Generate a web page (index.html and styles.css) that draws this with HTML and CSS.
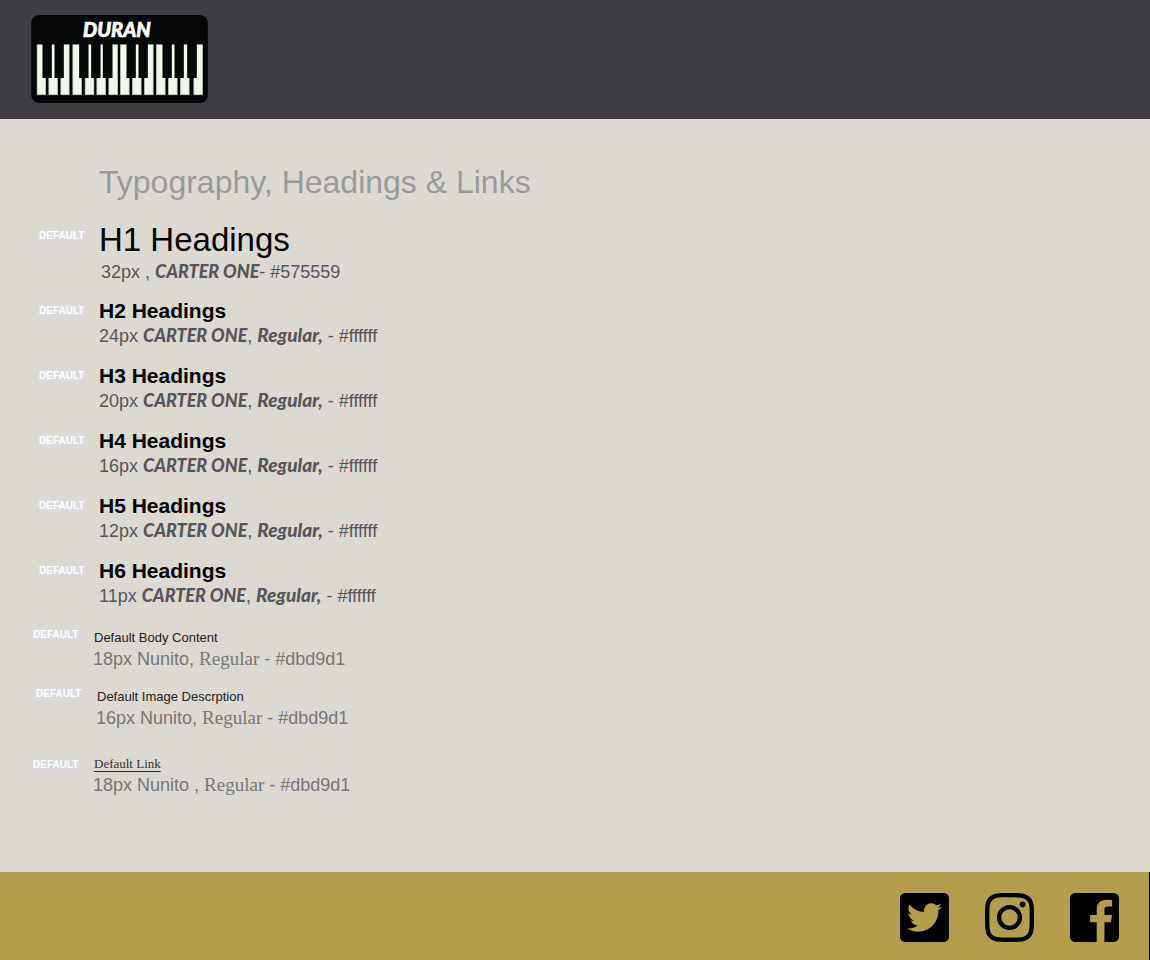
FILE: index.html
```html
<!DOCTYPE html>
<html lang="en">
<head>
<meta charset="utf-8">
<meta name="viewport" content="width=device-width, initial-scale=1">
<title>Duran Style Guide</title>
<link rel="stylesheet" href="styles.css">
</head>
<body>
<header class="site-header">
  <svg class="logo" viewBox="34 30 530 264" role="img" aria-label="Duran">
    <rect x="34" y="30" width="530" height="264" rx="24" fill="#050706"/>
    <text class="logo-text" x="291" y="95" text-anchor="middle">DURAN</text>
    <path fill="#f0f8ea" stroke="#c9cfc4" stroke-width="2" d="M52 119h25v150h-25zM87 119h26v150h-26zM123 119h25v150h-25zM159 119h26v150h-26zM196 119h26v150h-26zM231 119h26v150h-26zM267 119h26v150h-26zM302 119h26v150h-26zM338 119h26v150h-26zM374 119h26v150h-26zM410 119h26v150h-26zM446 119h26v150h-26zM482 119h26v150h-26zM522 119h26v150h-26z"/>
    <path fill="#050706" d="M68 103h28v116h-28zM104 103h28v116h-28zM178 103h28v116h-28zM214 103h28v116h-28zM249 103h29v116h-29zM320 103h28v116h-28zM356 103h28v116h-28zM428 103h28v116h-28zM464 103h28v116h-28zM502 103h29v116h-29z"/>
  </svg>
</header>

<main class="guide">
  <h2 class="guide-title">Typography, Headings &amp; Links</h2>

  <section class="sample sample-first">
    <span class="tag">DEFAULT</span>
    <div>
      <h1 class="display">H1 Headings</h1>
      <p class="spec spec-first">32px , <b class="brand">CARTER ONE</b>- #575559</p>
    </div>
  </section>
  <section class="sample">
    <span class="tag">DEFAULT</span>
    <div>
      <h2 class="heading">H2 Headings</h2>
      <p class="spec">24px <b class="brand">CARTER ONE</b>, <b class="brand brand-style">Regular,</b> - #ffffff</p>
    </div>
  </section>
  <section class="sample">
    <span class="tag">DEFAULT</span>
    <div>
      <h3 class="heading">H3 Headings</h3>
      <p class="spec">20px <b class="brand">CARTER ONE</b>, <b class="brand brand-style">Regular,</b> - #ffffff</p>
    </div>
  </section>
  <section class="sample">
    <span class="tag">DEFAULT</span>
    <div>
      <h4 class="heading">H4 Headings</h4>
      <p class="spec">16px <b class="brand">CARTER ONE</b>, <b class="brand brand-style">Regular,</b> - #ffffff</p>
    </div>
  </section>
  <section class="sample">
    <span class="tag">DEFAULT</span>
    <div>
      <h5 class="heading">H5 Headings</h5>
      <p class="spec">12px <b class="brand">CARTER ONE</b>, <b class="brand brand-style">Regular,</b> - #ffffff</p>
    </div>
  </section>
  <section class="sample">
    <span class="tag">DEFAULT</span>
    <div>
      <h6 class="heading">H6 Headings</h6>
      <p class="spec">11px <b class="brand">CARTER ONE</b>, <b class="brand brand-style">Regular,</b> - #ffffff</p>
    </div>
  </section>

  <section class="sample sample-body">
    <span class="tag">DEFAULT</span>
    <div>
      <p class="copy">Default Body Content</p>
      <p class="spec spec-light">18px Nunito, <span class="serif">Regular</span> - #dbd9d1</p>
    </div>
  </section>
  <section class="sample sample-body sample-image">
    <span class="tag">DEFAULT</span>
    <div>
      <p class="copy">Default Image Descrption</p>
      <p class="spec spec-light">16px Nunito, <span class="serif">Regular</span> - #dbd9d1</p>
    </div>
  </section>
  <section class="sample sample-body sample-link">
    <span class="tag">DEFAULT</span>
    <div>
      <p class="copy"><a class="link" href="#">Default Link</a></p>
      <p class="spec spec-light">18px Nunito , <span class="serif">Regular</span> - #dbd9d1</p>
    </div>
  </section>
</main>

<footer class="site-footer">
  <a class="social" href="#" aria-label="Twitter">
    <svg viewBox="0 32 448 448"><path d="M400 32H48C21.500 32 0 53.500 0 80v352c0 26.500 21.500 48 48 48h352c26.500 0 48-21.500 48-48V80c0-26.500-21.500-48-48-48zm-48.900 158.800c.2 2.800.2 5.700.2 8.500 0 86.700-66 186.600-186.600 186.600-37.200 0-71.700-10.800-100.700-29.400 5.300.6 10.400.8 15.800.8 30.700 0 58.900-10.400 81.400-28-28.800-.6-53-19.500-61.300-45.500 10.100 1.500 19.200 1.500 29.600-1.200-30-6.100-52.500-32.500-52.500-64.400v-.8c8.700 4.900 18.900 7.900 29.600 8.300a65.447 65.447 0 0 1-29.200-54.600c0-12.200 3.200-23.400 8.900-33.100 32.300 39.800 80.800 65.800 135.200 68.600-9.300-44.500 24-80.600 64-80.600 18.900 0 35.900 7.900 47.900 20.700 14.800-2.800 29-8.300 41.600-15.800-4.900 15.200-15.200 28-28.800 36.100 13.200-1.400 26-5.100 37.800-10.200-8.900 13.100-20.100 24.700-32.900 34z"/></svg>
  </a>
  <a class="social" href="#" aria-label="Instagram">
    <svg viewBox="0 32 448 448"><path d="M224.100 141c-63.600 0-114.900 51.300-114.900 114.900s51.300 114.900 114.900 114.900S339 319.500 339 255.900 287.700 141 224.100 141zm0 189.600c-41.100 0-74.700-33.500-74.700-74.700s33.500-74.700 74.700-74.700 74.700 33.500 74.700 74.700-33.600 74.700-74.700 74.700zm146.400-194.300c0 14.900-12 26.800-26.800 26.800-14.900 0-26.800-12-26.800-26.800s12-26.800 26.800-26.800 26.800 12 26.800 26.800zm76.100 27.200c-1.700-35.900-9.900-67.700-36.200-93.900-26.200-26.200-58-34.400-93.900-36.200-37-2.100-147.900-2.100-184.900 0-35.800 1.700-67.600 9.900-93.900 36.100s-34.400 58-36.200 93.900c-2.100 37-2.100 147.900 0 184.900 1.700 35.900 9.900 67.700 36.200 93.900s58 34.400 93.900 36.200c37 2.100 147.900 2.100 184.900 0 35.900-1.700 67.700-9.900 93.900-36.200 26.200-26.200 34.400-58 36.200-93.900 2.100-37 2.100-147.800 0-184.800zM398.800 388c-7.800 19.600-22.900 34.700-42.600 42.600-29.500 11.700-99.500 9-132.100 9s-102.700 2.600-132.100-9c-19.600-7.800-34.700-22.900-42.600-42.600-11.700-29.500-9-99.500-9-132.100s-2.600-102.700 9-132.100c7.800-19.600 22.900-34.700 42.600-42.600 29.500-11.700 99.500-9 132.100-9s102.700-2.600 132.100 9c19.600 7.800 34.700 22.900 42.600 42.600 11.700 29.500 9 99.500 9 132.100s2.700 102.700-9 132.100z"/></svg>
  </a>
  <a class="social" href="#" aria-label="Facebook">
    <svg viewBox="0 32 448 448"><path d="M48 32h352c26 0 48 22 48 48v352c0 26-22 48-48 48h-85V300h60l9-68h-69v-43c0-20 6-33 34-33h36V97c-6-1-28-3-53-3-53 0-88 32-88 91v47h-60v68h60v180H48c-26 0-48-22-48-48V80c0-26 22-48 48-48z"/></svg>
  </a>
</footer>
</body>
</html>
```
FILE: styles.css
```css
* {
  box-sizing: border-box;
}

body {
  display: flex;
  flex-direction: column;
  min-height: 100vh;
  margin: 0;
  background: #dbd9d1;
  color: #000;
  font-family: "Liberation Sans", Arial, sans-serif;
}

h1, h2, h3, h4, h5, h6, p {
  margin: 0;
}

.site-header {
  padding: 15px 31px 16px;
  background: #3e3c41;
}

.logo {
  display: block;
  width: 177px;
  height: 88px;
}

.logo-text {
  fill: #fff;
  stroke: #fff;
  stroke-width: 2px;
  font: italic 900 60px Lato, sans-serif;
}

.guide {
  flex: 1;
  padding: 44px 38px 60px;
}

.guide-title {
  margin-left: 61px;
  color: #999;
  font-size: 32px;
  font-weight: 400;
  line-height: 38px;
}

.sample {
  display: grid;
  grid-template-columns: 50px 1fr;
  column-gap: 11px;
  align-items: start;
  margin-top: 14px;
}

.sample-first {
  margin-top: 19px;
}

.tag {
  justify-self: start;
  margin-top: 6px;
  padding: 0 1px;
  background: #d9dadb;
  color: #fff;
  font-size: 10px;
  font-weight: 700;
  line-height: 12px;
}

.sample-first .tag {
  margin-top: 10px;
}

.display {
  font-size: 33px;
  font-weight: 400;
  line-height: 40px;
}

.heading {
  font-size: 21px;
  font-weight: 700;
  line-height: 24px;
}

.spec {
  color: #575559;
  font-size: 18px;
  line-height: 27px;
}

.spec-first {
  margin-left: 2px;
  line-height: 25px;
}

.spec-light {
  color: #777;
  line-height: 24px;
}

.brand {
  font-family: Lato, sans-serif;
  font-style: italic;
  font-weight: 900;
  line-height: 20px;
}

.brand-style {
  font-size: 19px;
}

.serif {
  font-family: "Liberation Serif", serif;
  font-size: 19px;
  line-height: 20px;
}

.sample-body {
  margin: 18px 0 0 -6px;
}

.sample-body .tag {
  margin-top: 1px;
}

.copy {
  margin-left: 1px;
  color: #222;
  font-size: 13px;
  line-height: 19px;
}

.sample-image {
  margin: 16px 0 0 -3px;
}

.sample-link {
  margin-top: 24px;
}

.sample-link .tag {
  margin-top: 5px;
}

.link {
  color: #333;
  font-family: "Liberation Serif", serif;
  font-size: 13px;
  text-decoration-thickness: 1px;
  text-underline-offset: 3px;
}

.site-footer {
  display: flex;
  justify-content: flex-end;
  gap: 36px;
  padding: 21px 30px 18px;
  border-right: 1px solid #000;
  background: #b29e4c;
}

.social {
  display: block;
  width: 49px;
  height: 49px;
}

.social svg {
  display: block;
  width: 100%;
  height: 100%;
}
```
